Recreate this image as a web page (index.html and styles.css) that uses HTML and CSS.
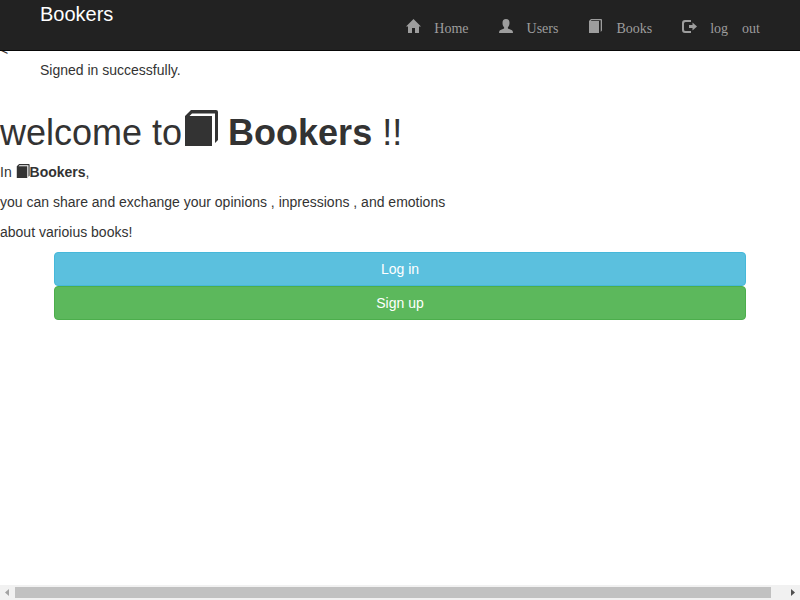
FILE: index.html
```html
<!DOCTYPE html>
<html lang="en">
<head>
<meta charset="utf-8">
<title>Bookers</title>
<link rel="stylesheet" href="styles.css">
</head>
<body>
<svg class="defs" aria-hidden="true">
  <symbol id="book" viewBox="0 0 36 36"><path d="M2 6h27v30H2zM2 6L8 0H33Q35 0 35 2V30L32 33V3.500H9L6.500 6z"/></symbol>
</svg>
<header class="navbar">
  <a class="brand">Bookers</a>
  <nav class="nav">
    <a class="nav-link"><svg class="icon" viewBox="0 0 14 14"><path d="M7.500 0L15 7.500H13V14H9V9H6V14H2V7.500H0z"/></svg>Home</a>
    <a class="nav-link"><svg class="icon" viewBox="0 0 14 14"><path d="M7 0C9.500 0 10.500 1.500 10.500 4C10.500 6 9.800 7.500 8.900 8.300V9.500L13 11.300Q14 12 14 14H0Q0 12 1 11.300L5.100 9.500V8.300C4.200 7.500 3.500 6 3.500 4C3.500 1.500 4.500 0 7 0z"/></svg>Users</a>
    <a class="nav-link"><svg class="icon" viewBox="0 0 14 14"><path d="M1 2H11V14H1zM1 2L3 0H13Q14 0 14 1V11.500L12.700 13V1.300H3.500L2.800 2z"/></svg>Books</a>
    <a class="nav-link"><svg class="icon" viewBox="0 0 14 14"><path d="M9 1H3Q0 1 0 4V11Q0 14 3 14H9V12H3.500Q2 12 2 10.500V4.500Q2 3 3.500 3H9zM10.500 3.500L15 7.500L10.500 11.500V9H7V6H10.500z"/></svg>log out</a>
  </nav>
</header>
<main class="content">
  <div class="stray"><span>&lt;</span></div>
  <p class="notice">Signed in successfully.</p>
  <h1>welcome to<svg class="book"><use href="#book"/></svg> <b>Bookers</b> !!</h1>
  <p>In <svg class="book"><use href="#book"/></svg><b>Bookers</b>,</p>
  <p>you can share and exchange your opinions , inpressions , and emotions</p>
  <p>about varioius books!</p>
  <div class="actions">
    <a class="btn btn-info">Log in</a>
    <a class="btn btn-success">Sign up</a>
  </div>
</main>
<div class="scrollbar">
  <svg class="arrow" viewBox="0 0 15 15"><path fill="#a3a3a3" d="M9 4V11L5 7.500z"/></svg>
  <div class="thumb"></div>
  <svg class="arrow arrow-right" viewBox="0 0 15 15"><path fill="#505050" d="M6 4V11L10 7.500z"/></svg>
</div>
</body>
</html>
```
FILE: styles.css
```css
* { box-sizing: border-box; }
body {
  margin: 0;
  height: 600px;
  display: flex;
  flex-direction: column;
  overflow: hidden;
  background: #fff;
  color: #333;
  font: 14px/20px "Liberation Sans", Arial, sans-serif;
}
.defs { position: absolute; width: 0; height: 0; }
.navbar {
  flex: none;
  display: flex;
  justify-content: space-between;
  height: 51px;
  padding: 0 25px 0 40px;
  background: #222;
  border-bottom: 1px solid #080808;
}
.brand { color: #fff; font-size: 20px; line-height: 28px; }
.nav { display: flex; }
.nav-link {
  display: flex;
  padding: 19px 15px 0;
  color: #9d9d9d;
  font-family: "Liberation Serif", serif;
  word-spacing: 10.5px;
}
.icon {
  width: 14px;
  height: 14px;
  margin-right: 14px;
  fill: currentColor;
  overflow: visible;
}
.content { flex: 1; }
/* the stray character is mostly hidden behind the navbar */
.stray { height: 9px; overflow: hidden; }
.stray span { display: block; margin-top: -11px; }
.notice { margin: 0 0 0 40px; }
p { margin: 0 0 10px; }
h1 {
  margin: 33px 0 9px;
  font-size: 36px;
  font-weight: 500;
  line-height: 40px;
}
.book {
  width: 1em;
  height: 1em;
  fill: currentColor;
  vertical-align: -1px;
}
h1 .book { margin: -6px -1px 0 1px; }
.actions { padding: 0 54px; }
.btn {
  display: block;
  height: 34px;
  padding: 6px 12px;
  border: 1px solid;
  border-radius: 4px;
  color: #fff;
  text-align: center;
}
.btn-info { background: #5bc0de; border-color: #46b8da; }
.btn-success { background: #5cb85c; border-color: #4cae4c; }
.scrollbar {
  flex: none;
  display: flex;
  height: 15px;
  background: #f1f1f1;
}
.arrow { flex: none; width: 15px; height: 15px; }
.arrow-right { margin-left: auto; }
.thumb { width: 756px; height: 11px; margin-top: 2px; background: #c1c1c1; }
```
